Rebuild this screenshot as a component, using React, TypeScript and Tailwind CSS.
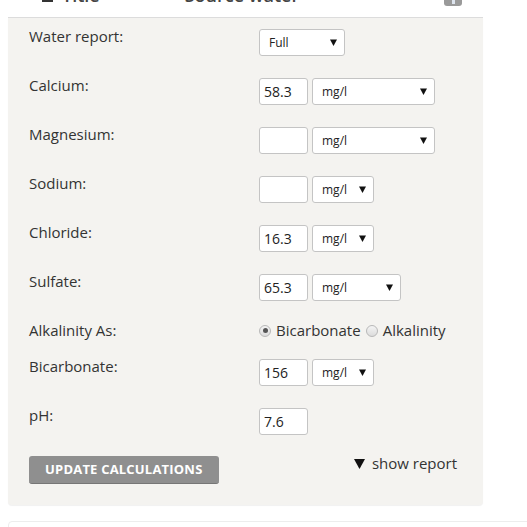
import React from "react";

const Arrow = () => (
  <svg width="7" height="7" viewBox="0 0 7 7" className="shrink-0">
    <polygon points="0,0.5 7,0.5 3.5,7" fill="#111" />
  </svg>
);

const Select = ({ value, w }: { value: string; w: string }) => (
  <div
    className={`${w} h-[27px] bg-white border border-[#c4c4c4] rounded-[3px] flex items-center justify-between pl-[9px] pr-[7px] text-[12px] text-[#222]`}
  >
    <span>{value}</span>
    <Arrow />
  </div>
);

const Input = ({ value }: { value?: string }) => (
  <div className="w-[49px] h-[27px] bg-white border border-[#c4c4c4] rounded-[3px] flex items-center pl-[4px] text-[14px] text-[#222]">
    {value}
  </div>
);

const Label = ({ children }: { children: React.ReactNode }) => (
  <div className="w-[230px] shrink-0 -mt-[3px] text-[15px] leading-[21px] text-[#333]">
    {children}
  </div>
);

const Radio = ({ checked }: { checked?: boolean }) => (
  <span className="w-[12px] h-[12px] rounded-full border border-[#b8b8b8] bg-gradient-to-b from-[#f4f4f4] to-[#dcdcdc] flex items-center justify-center shrink-0">
    {checked && <span className="w-[5px] h-[5px] rounded-full bg-[#555]" />}
  </span>
);

export default function App() {
  return (
    <div className="w-[527px] h-[527px] bg-white overflow-hidden font-['Open_Sans',sans-serif] text-[#333]">
      <div className="ml-2 w-[475px]">
        <div className="h-[18px] border-b border-[#dcdcdc] overflow-hidden">
          <div className="-mt-[17px] flex items-start h-[24px] text-[18px] leading-[24px] font-semibold text-[#444]">
            <span className="ml-[34px] mt-[6px] w-[11px] h-[13px] bg-[#333] rounded-t-[5px]" />
            <span className="ml-[9px]">Title</span>
            <span className="ml-[85px]">Source water</span>
            <span className="ml-auto mr-[21px] mt-[-1px] w-[18px] h-[24px] rounded-[3px] bg-[#9a9a9a] flex justify-center">
              <span className="mt-[17px] w-[3px] h-[5px] bg-[#dde4ee]" />
            </span>
          </div>
        </div>
        <div className="bg-[#f4f3f0] rounded-b-[4px] shadow-[0_1px_1px_rgba(0,0,0,0.06)] pl-[21px] pr-[26px] pt-[11px] pb-[21px]">
          <div className="flex items-start h-[49px]">
            <Label>Water report:</Label>
            <Select value="Full" w="w-[86px]" />
          </div>
          <div className="flex items-start h-[49px]">
            <Label>Calcium:</Label>
            <div className="flex gap-[4px]">
              <Input value="58.3" />
              <Select value="mg/l" w="w-[123px]" />
            </div>
          </div>
          <div className="flex items-start h-[49px]">
            <Label>Magnesium:</Label>
            <div className="flex gap-[4px]">
              <Input />
              <Select value="mg/l" w="w-[123px]" />
            </div>
          </div>
          <div className="flex items-start h-[49px]">
            <Label>Sodium:</Label>
            <div className="flex gap-[4px]">
              <Input />
              <Select value="mg/l" w="w-[62px]" />
            </div>
          </div>
          <div className="flex items-start h-[49px]">
            <Label>Chloride:</Label>
            <div className="flex gap-[4px]">
              <Input value="16.3" />
              <Select value="mg/l" w="w-[62px]" />
            </div>
          </div>
          <div className="flex items-start h-[49px]">
            <Label>Sulfate:</Label>
            <div className="flex gap-[4px]">
              <Input value="65.3" />
              <Select value="mg/l" w="w-[89px]" />
            </div>
          </div>
          <div className="flex items-start h-[36px]">
            <Label>Alkalinity As:</Label>
            <div className="-mt-[3px] h-[21px] flex items-center text-[15px] leading-[21px] text-[#333]">
              <Radio checked />
              <span className="ml-[5px]">Bicarbonate</span>
              <span className="ml-[5px]"><Radio /></span>
              <span className="ml-[5px]">Alkalinity</span>
            </div>
          </div>
          <div className="flex items-start h-[49px]">
            <Label>Bicarbonate:</Label>
            <div className="flex gap-[4px]">
              <Input value="156" />
              <Select value="mg/l" w="w-[62px]" />
            </div>
          </div>
          <div className="flex items-start h-[48px]">
            <Label>pH:</Label>
            <Input value="7.6" />
          </div>
          <div className="flex items-start justify-between">
            <button className="h-[28px] px-[16px] bg-[#8f8f8f] border-b border-[#767676] rounded-[3px] text-white text-[13px] font-bold tracking-[0.2px] leading-[27px]">
              UPDATE CALCULATIONS
            </button>
            <div className="-mt-[3px] flex items-center gap-[7px] text-[15px] leading-[21px] text-[#333]">
              <svg width="11" height="10" viewBox="0 0 11 10">
                <polygon points="0,0 11,0 5.5,10" fill="#111" />
              </svg>
              <span>show report</span>
            </div>
          </div>
        </div>
        <div className="mt-[16px] w-[560px] h-[40px] border border-[#ededed] rounded-[4px] bg-white" />
      </div>
    </div>
  );
}
